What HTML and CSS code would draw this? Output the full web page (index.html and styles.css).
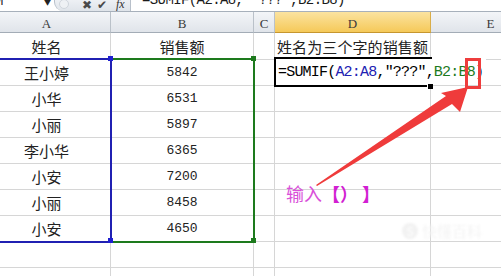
FILE: index.html
```html
<!DOCTYPE html>
<html lang="zh-CN">
<head>
    <meta charset="UTF-8">
    <title>SUMIF 通配符</title>
    <link rel="stylesheet" href="styles.css">
</head>
<body>
    <!-- Formula bar -->
    <div class="formula-bar">
        <div class="name-box">
            <span class="name-text">M</span>
            <span class="drop">&#9660;</span>
        </div>
        <div class="tools">
            <span class="tool dim"></span>
            <span class="tool x">&#10006;</span>
            <span class="tool ok">&#10004;</span>
            <span class="tool fx">fx</span>
        </div>
        <div class="formula-input">
            <span class="formula-text">=SUMIF(A2:A8, "???",B2:B8)</span>
        </div>
    </div>

    <!-- Sheet -->
    <div class="sheet">
        <div class="head">A</div>
        <div class="head">B</div>
        <div class="head">C</div>
        <div class="head active">D</div>
        <div class="head">E</div>

        <div class="cell">姓名</div>
        <div class="cell">销售额</div>
        <div class="cell"></div>
        <div class="cell left">姓名为三个字的销售额</div>
        <div class="cell"></div>

        <div class="cell">王小婷</div>
        <div class="cell num">5842</div>
        <div class="cell"></div>
        <div class="cell"></div>
        <div class="cell"></div>

        <div class="cell">小华</div>
        <div class="cell num">6531</div>
        <div class="cell"></div>
        <div class="cell"></div>
        <div class="cell"></div>

        <div class="cell">小丽</div>
        <div class="cell num">5897</div>
        <div class="cell"></div>
        <div class="cell"></div>
        <div class="cell"></div>

        <div class="cell">李小华</div>
        <div class="cell num">6365</div>
        <div class="cell"></div>
        <div class="cell"></div>
        <div class="cell"></div>

        <div class="cell">小安</div>
        <div class="cell num">7200</div>
        <div class="cell"></div>
        <div class="cell"></div>
        <div class="cell"></div>

        <div class="cell">小丽</div>
        <div class="cell num">8458</div>
        <div class="cell"></div>
        <div class="cell"></div>
        <div class="cell"></div>

        <div class="cell">小安</div>
        <div class="cell num">4650</div>
        <div class="cell"></div>
        <div class="cell"></div>
        <div class="cell"></div>

        <div class="cell"></div>
        <div class="cell"></div>
        <div class="cell"></div>
        <div class="cell"></div>
        <div class="cell"></div>

        <div class="cell"></div>
        <div class="cell"></div>
        <div class="cell"></div>
        <div class="cell"></div>
        <div class="cell"></div>
    </div>

    <!-- Range highlights -->
    <div class="range-a"></div>
    <div class="range-b"></div>
    <span class="handle blue h-a1"></span>
    <span class="handle blue h-a2"></span>
    <span class="handle green h-b1"></span>
    <span class="handle green h-b2"></span>

    <!-- Cell being edited -->
    <div class="editor">
        <span class="edit-text">=SUMIF(<span class="ref-a">A2:A8</span>,"???",<span class="ref-b">B2:B8</span>)</span>
        <span class="fill-handle"></span>
    </div>

    <!-- Annotation -->
    <div class="red-box"></div>
    <svg class="arrow" width="501" height="276" viewBox="0 0 501 276">
        <polygon points="316,185 446,96 441,93 468,87 460,112 452,104 317,186" fill="#ef3b3b"/>
    </svg>
    <div class="note">输入<b>【）</b> <b>】</b></div>

    <div class="watermark"><span class="wm-logo">S</span>快懂百科</div>
</body>
</html>
```

FILE: styles.css
```css
body {
    margin: 0;
    width: 501px;
    height: 276px;
    overflow: hidden;
    position: relative;
    background-color: white;
    font-family: "Noto Sans CJK SC", sans-serif;
    color: #1a1a1a;
}

/* formula bar */
.formula-bar {
    display: flex;
    height: 11px;
    border-bottom: 1px solid #a7b0bb;
    overflow: hidden;
    background-color: white;
}

.name-box {
    width: 54px;
    display: flex;
    align-items: flex-start;
    justify-content: space-between;
    padding-right: 3px;
    box-sizing: border-box;
}

.name-text {
    margin-left: -5px;
    margin-top: -7px;
    font-family: "Liberation Mono", monospace;
    font-size: 14px;
}

.drop {
    font-size: 7px;
    line-height: 7px;
    margin-top: -1px;
    color: #222;
}

.tools {
    width: 76px;
    display: flex;
    align-items: center;
    gap: 5px;
    padding-left: 4px;
    box-sizing: border-box;
    background: linear-gradient(#f3f5f8, #dfe4ea);
    border-radius: 0 0 0 9px;
    border-left: 1px solid #b8c0ca;
    margin-top: -4px;
    height: 15px;
}

.tool {
    font-size: 12px;
    color: #4a4a4a;
    line-height: 12px;
}

.tool.dim {
    width: 10px;
    height: 10px;
    border-radius: 50%;
    background: #eef1f4;
    border: 1px solid #cfd5dc;
    box-sizing: border-box;
}

.tool.x { margin-left: 8px; }

.tool.fx {
    margin-left: 4px;
    font-family: "Liberation Serif", serif;
    font-style: italic;
    font-size: 12px;
    color: #333;
}

.formula-input {
    flex: 1;
    border-left: 1px solid #b8c0ca;
    padding-left: 11px;
}

.formula-text {
    display: block;
    margin-top: -8px;
    font-family: "Liberation Mono", monospace;
    font-size: 14px;
    letter-spacing: -0.6px;
    white-space: pre;
}

/* sheet grid */
.sheet {
    display: grid;
    grid-template-columns: 128px 143px 21px 156px 120px;
    grid-template-rows: 21px 27px repeat(9, 26px);
    margin-left: -17px;
}

.head, .cell {
    box-sizing: border-box;
    display: flex;
    align-items: center;
    justify-content: center;
    border-right: 1px solid #d6d6d6;
    border-bottom: 1px solid #d6d6d6;
}

.head {
    background: linear-gradient(#f3f5f8, #e0e4ea);
    border-right-color: #bac1c9;
    border-bottom-color: #a3acb6;
    padding-top: 4px;
    font-family: "Liberation Serif", serif;
    font-size: 13px;
    color: #3a3a3a;
}

.head.active {
    background: linear-gradient(#fbe3a0, #f5c959);
    border-right-color: #d9ad49;
    border-bottom-color: #c6962f;
}

.cell {
    font-size: 15px;
    color: #222;
}

.cell.left {
    justify-content: flex-start;
    padding-left: 2px;
    letter-spacing: 0.1px;
}

.cell.num {
    font-family: "Liberation Mono", monospace;
    font-size: 13px;
}

/* range highlights */
.range-a {
    position: absolute;
    left: -10px;
    top: 58px;
    width: 122px;
    height: 185px;
    box-sizing: border-box;
    border: 2px solid #2020b2;
}

.range-b {
    position: absolute;
    left: 112px;
    top: 58px;
    width: 143px;
    height: 185px;
    box-sizing: border-box;
    border: 2px solid #1d7a1d;
    border-left: none;
}

.handle {
    position: absolute;
    width: 5px;
    height: 5px;
}

.handle.blue { background-color: #1f1fd0; }
.handle.green { background-color: #1d7a1d; }
.h-a1 { left: 108px; top: 56px; }
.h-a2 { left: 108px; top: 238px; }
.h-b1 { left: 251px; top: 56px; }
.h-b2 { left: 251px; top: 238px; }

/* edited cell */
.editor {
    position: absolute;
    left: 274px;
    top: 57px;
    width: 158px;
    height: 30px;
    box-sizing: border-box;
    border: 2px solid #000;
    border-right: none;
}

.edit-text {
    position: absolute;
    left: 0;
    top: 0;
    height: 26px;
    padding: 0 3px 0 2px;
    display: flex;
    align-items: center;
    background-color: white;
    font-family: "Liberation Mono", monospace;
    font-size: 15px;
    letter-spacing: -0.8px;
    white-space: pre;
    color: #000;
}

.ref-a { color: #2020b2; }
.ref-b { color: #1d7a1d; }

.fill-handle {
    position: absolute;
    right: -1px;
    bottom: -4px;
    width: 5px;
    height: 5px;
    background-color: #000;
    border-left: 1px solid #fff;
}

/* annotation */
.red-box {
    position: absolute;
    left: 465px;
    top: 58px;
    width: 16px;
    height: 31px;
    box-sizing: border-box;
    border: 3px solid #ee3d3d;
}

.arrow {
    position: absolute;
    left: 0;
    top: 0;
}

.note {
    position: absolute;
    left: 286px;
    top: 181px;
    font-size: 18px;
    line-height: 24px;
    color: #d950d9;
    white-space: pre;
}

.note b {
    color: #d21fd2;
}

.watermark {
    position: absolute;
    left: 402px;
    top: 220px;
    font-size: 15px;
    color: #f4f4f4;
    filter: blur(1px);
    display: flex;
    align-items: center;
    gap: 4px;
}

.wm-logo {
    width: 16px;
    height: 16px;
    border-radius: 50%;
    background-color: #f2f2f2;
    color: white;
    font-size: 12px;
    display: flex;
    align-items: center;
    justify-content: center;
}
```
